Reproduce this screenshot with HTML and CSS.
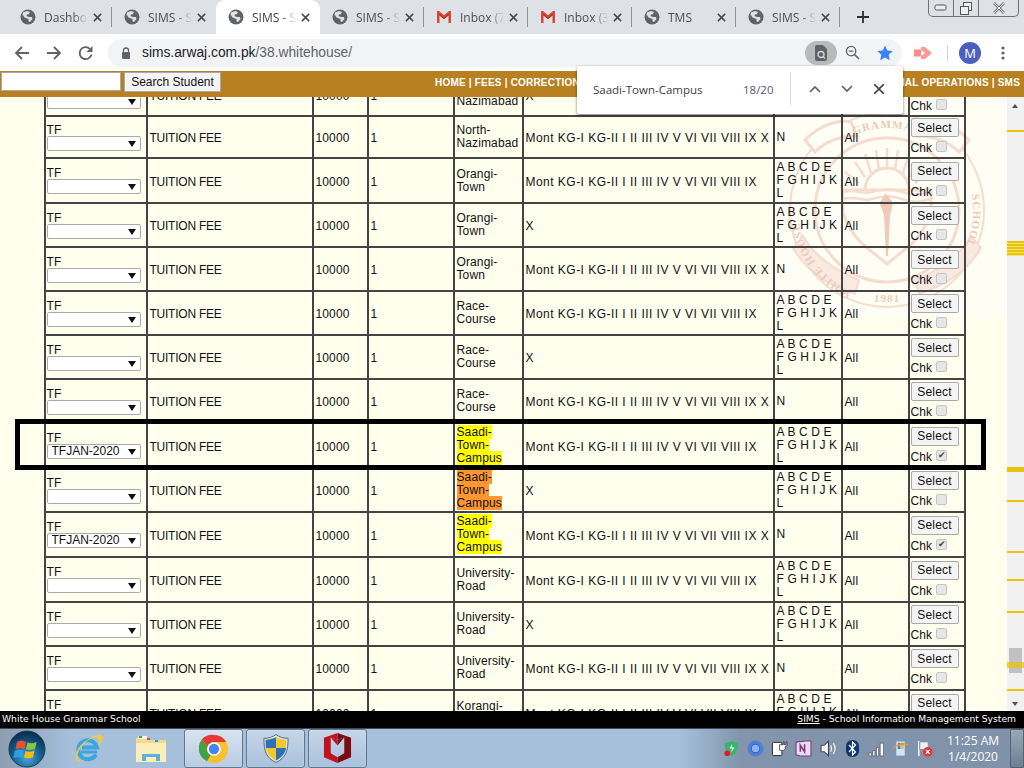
FILE: index.html
```html
<!DOCTYPE html>
<html lang="en">
<head>
<meta charset="utf-8">
<title>SIMS</title>
<link rel="stylesheet" href="styles.css">
</head>
<body>
<svg class="defs" width="0" height="0" aria-hidden="true">
  <symbol id="globe" viewBox="0 0 16 16">
    <circle cx="8" cy="8" r="7.5" fill="#5f6368"/>
    <path d="M3 3.5l4-1.5 3 1-1 2-2 .5-.5 1.5 2.5 1 3 0 .5 2-2.500 3-1.500-.5 0-2.500-3-1-1-.5-2-3z" fill="#dee1e6"/>
  </symbol>
  <symbol id="gmail" viewBox="0 0 16 16">
    <path d="M1 2h2l5 4.200L13 2h2v12h-2.500V6.500L8 10 3.500 6.500V14H1z" fill="#d44638"/>
    <path d="M3.500 6.500L8 10l4.500-3.500V5L8 8.500 3.500 5z" fill="#b23121"/>
  </symbol>
  <symbol id="x" viewBox="0 0 10 10">
    <path d="M1 1l8 8M9 1l-8 8" fill="none" stroke="#45484c" stroke-width="1.700"/>
  </symbol>
</svg>

<div class="app">
  <header class="tabstrip">
    <div class="tab sep"><svg class="fav"><use href="#globe"/></svg><span class="tlabel">Dashboard</span><svg class="tx"><use href="#x"/></svg></div>
    <div class="tab"><svg class="fav"><use href="#globe"/></svg><span class="tlabel">SIMS - School</span><svg class="tx"><use href="#x"/></svg></div>
    <div class="tab active"><svg class="fav"><use href="#globe"/></svg><span class="tlabel">SIMS - School</span><svg class="tx"><use href="#x"/></svg></div>
    <div class="tab sep"><svg class="fav"><use href="#globe"/></svg><span class="tlabel">SIMS - School</span><svg class="tx"><use href="#x"/></svg></div>
    <div class="tab sep"><svg class="fav"><use href="#gmail"/></svg><span class="tlabel">Inbox (7)</span><svg class="tx"><use href="#x"/></svg></div>
    <div class="tab sep"><svg class="fav"><use href="#gmail"/></svg><span class="tlabel">Inbox (3)</span><svg class="tx"><use href="#x"/></svg></div>
    <div class="tab sep"><svg class="fav"><use href="#globe"/></svg><span class="tlabel">TMS</span><svg class="tx"><use href="#x"/></svg></div>
    <div class="tab sep"><svg class="fav"><use href="#globe"/></svg><span class="tlabel">SIMS - School</span><svg class="tx"><use href="#x"/></svg></div>
    <svg class="plus" viewBox="0 0 12 12"><path d="M6 0v12M0 6h12" stroke="#2c2e31" stroke-width="1.800" fill="none"/></svg>
    <div class="winctl">
      <span class="wbtn wmin"><svg viewBox="0 0 14 8" width="14" height="8"><rect x="1" y="1" width="11" height="5" rx="1.500" fill="#eee" stroke="#555"/></svg></span>
      <span class="wbtn wmid"><svg viewBox="0 0 14 13" width="14" height="13"><rect x="4.500" y=".5" width="8" height="8" fill="#eee" stroke="#555"/><rect x="1.500" y="4.500" width="8" height="8" fill="#eee" stroke="#555"/></svg></span>
      <span class="wbtn wcls"><svg viewBox="0 0 14 12" width="14" height="12"><path d="M2 1l10 10M12 1L2 11" stroke="#777" stroke-width="2.500" fill="none"/><path d="M2 1l10 10M12 1L2 11" stroke="#eee" stroke-width="1" fill="none"/></svg></span>
    </div>
  </header>

  <nav class="toolbar">
    <svg class="tbi" viewBox="0 0 16 16"><path d="M15 8H2M8 2L2 8l6 6" fill="none" stroke="#5f6368" stroke-width="1.800"/></svg>
    <svg class="tbi" viewBox="0 0 16 16"><path d="M1 8h13M8 2l6 6-6 6" fill="none" stroke="#5f6368" stroke-width="1.800"/></svg>
    <svg class="tbi" viewBox="0 0 16 16"><path d="M13.500 9.500A6 6 0 1 1 12 4" fill="none" stroke="#5f6368" stroke-width="1.800"/><path d="M14.500 1v6h-6z" fill="#5f6368"/></svg>
    <div class="omnibox">
      <svg class="lock" viewBox="0 0 10 12"><path d="M2.500 5V3.500a2.500 2.500 0 0 1 5 0V5" fill="none" stroke="#5f6368" stroke-width="1.300"/><rect x="1" y="5" width="8" height="7" rx="1" fill="#5f6368"/></svg>
      <span class="url"><span class="host">sims.arwaj.com.pk</span>/38.whitehouse/</span>
      <span class="omni-right">
        <span class="lens"><svg viewBox="0 0 14 16" width="14" height="16"><path d="M1 2a2 2 0 0 1 2-2h6l4 4v10a2 2 0 0 1-2 2H3a2 2 0 0 1-2-2z" fill="#5f6368"/><circle cx="7" cy="9.500" r="3" fill="none" stroke="#d6d6d6" stroke-width="1.300"/><path d="M9 11.500l2 2" stroke="#d6d6d6" stroke-width="1.300"/></svg></span>
        <svg class="zoomi" viewBox="0 0 16 16"><circle cx="6.500" cy="6.500" r="5" fill="none" stroke="#5f6368" stroke-width="1.400"/><path d="M10 10l5 5" stroke="#5f6368" stroke-width="1.600"/><path d="M4 6.500h5" stroke="#5f6368" stroke-width="1.300"/></svg>
        <svg class="star" viewBox="0 0 16 16"><path d="M8 .5l2.300 5 5.400.6-4 3.700 1.100 5.400L8 12.500l-4.800 2.700 1.100-5.400-4-3.700 5.400-.6z" fill="#3b82f6"/></svg>
      </span>
    </div>
    <svg class="ext" viewBox="0 0 18 14"><path d="M0 4h6V5H0z" fill="#fb8a8a"/><rect x="0" y="3.500" width="7" height="7" fill="#fb8a8a"/><path d="M7 1h4l7 6-7 6H7v-3l4-3-4-3z" fill="#fb9a9a"/></svg>
    <span class="tbsep"></span>
    <span class="avatar">M</span>
    <svg class="dots" viewBox="0 0 4 14"><circle cx="2" cy="2" r="1.600" fill="#5f6368"/><circle cx="2" cy="7" r="1.600" fill="#5f6368"/><circle cx="2" cy="12" r="1.600" fill="#5f6368"/></svg>
  </nav>

  <div class="topbar">
    <input class="sinput" type="text" aria-label="Search">
    <button class="sbtn" type="button">Search Student</button>
    <div class="menu"><span>HOME | FEES | CORRECTIONS</span><span>SPECIAL OPERATIONS | SMS</span></div>
  </div>

  <main class="content">
    <svg class="seal" viewBox="0 0 237 220" aria-hidden="true">
      <rect width="237" height="220" fill="#fffef5"/>
      <g transform="translate(117 113)" fill="none" stroke="#f4dcd0">
        <circle r="97" stroke-width="2"/>
        <circle r="72" stroke-width="3"/>
        <path id="arcT" d="M-82 0A82 82 0 0 1 82 0" stroke="none"/>
        <path id="arcL" d="M-14 88A89 89 0 0 1-88 -10" stroke="none"/>
        <path id="arcR" d="M76 -40A86 86 0 0 1 64 58" stroke="none"/>
        <path d="M-82 -70c18-18 36-20 46-18l6 14c-16 0-30 4-42 16z" fill="#fffef5" stroke-width="3"/>
        <path d="M82 -70c-18-18-36-20-46-18l-6 14c16 0 30 4 42 16z" fill="#fffef5" stroke-width="3"/>
        <path d="M-44 -20L44 -20 44 2 C36 30 16 40 0 54 C-16 40 -36 30 -44 2z" stroke-width="3"/>
        <g stroke-width="2.500">
          <path d="M0 -62V-40M-11 -60l3 20M11 -60l-3 20M-22 -56l6 19M22 -56l-6 19M-32 -48l10 15M32 -48l-10 15M-42 -38l14 11M42 -38l-14 11"/>
          <path d="M-22 -20a22 22 0 0 1 44 0" stroke-width="3"/>
          <path d="M-44 -18c12-4 18 3 29 0s18-4 30 0 18 3 29 0M-44 -11c12-4 18 3 29 0s18-4 30 0 18 3 29 0"/>
        </g>
        <path d="M-6 -3c-3-6 3-9 4-14 3 4 9 7 7 14l-2 8H-3zM-3 5H3L1 46H-1z" fill="#f1c9b7" stroke="none"/>
        <path d="M-84 26c14 24 36 36 56 44l-4 14c-24-8-48-22-62-46zM84 26c-14 24-36 36-56 44l4 14c24-8 48-22 62-46z" fill="#f9e9e0" stroke-width="2"/>
        <g class="sealtext" stroke="none">
          <text><textPath href="#arcT" startOffset="50%" text-anchor="middle">GRAMMAR</textPath></text>
          <text><textPath href="#arcL" startOffset="50%" text-anchor="middle">WHITE HOUSE</textPath></text>
          <text><textPath href="#arcR" startOffset="50%" text-anchor="middle">SCHOOL</textPath></text>
          <text x="0" y="92" text-anchor="middle">1981</text>
        </g>
      </g>
    </svg>

    <table class="grid">
      <colgroup><col class="c1"><col class="c2"><col class="c3"><col class="c4"><col class="c5"><col class="c6"><col class="c7"><col class="c8"><col class="c9"></colgroup>
      <tbody>
        <tr class="r42"><td><span class="tf">TF</span><span class="sel"><select aria-label="TF"><option></option></select></span></td><td>TUITION FEE</td><td>10000</td><td>1</td><td>North-<br>Nazimabad</td><td>X</td><td>A B C D E F G H I J K L</td><td>All</td><td><button class="pick" type="button">Select</button><label class="chk">Chk <input type="checkbox"></label></td></tr>
        <tr class="r42"><td><span class="tf">TF</span><span class="sel"><select aria-label="TF"><option></option></select></span></td><td>TUITION FEE</td><td>10000</td><td>1</td><td>North-<br>Nazimabad</td><td>Mont KG-I KG-II I II III IV V VI VII VIII IX X</td><td>N</td><td>All</td><td><button class="pick" type="button">Select</button><label class="chk">Chk <input type="checkbox"></label></td></tr>
        <tr class="r45"><td><span class="tf">TF</span><span class="sel"><select aria-label="TF"><option></option></select></span></td><td>TUITION FEE</td><td>10000</td><td>1</td><td>Orangi-<br>Town</td><td>Mont KG-I KG-II I II III IV V VI VII VIII IX</td><td>A B C D E F G H I J K L</td><td>All</td><td><button class="pick" type="button">Select</button><label class="chk">Chk <input type="checkbox"></label></td></tr>
        <tr class="r44"><td><span class="tf">TF</span><span class="sel"><select aria-label="TF"><option></option></select></span></td><td>TUITION FEE</td><td>10000</td><td>1</td><td>Orangi-<br>Town</td><td>X</td><td>A B C D E F G H I J K L</td><td>All</td><td><button class="pick" type="button">Select</button><label class="chk">Chk <input type="checkbox"></label></td></tr>
        <tr class="r44"><td><span class="tf">TF</span><span class="sel"><select aria-label="TF"><option></option></select></span></td><td>TUITION FEE</td><td>10000</td><td>1</td><td>Orangi-<br>Town</td><td>Mont KG-I KG-II I II III IV V VI VII VIII IX X</td><td>N</td><td>All</td><td><button class="pick" type="button">Select</button><label class="chk">Chk <input type="checkbox"></label></td></tr>
        <tr class="r44"><td><span class="tf">TF</span><span class="sel"><select aria-label="TF"><option></option></select></span></td><td>TUITION FEE</td><td>10000</td><td>1</td><td>Race-<br>Course</td><td>Mont KG-I KG-II I II III IV V VI VII VIII IX</td><td>A B C D E F G H I J K L</td><td>All</td><td><button class="pick" type="button">Select</button><label class="chk">Chk <input type="checkbox"></label></td></tr>
        <tr class="r44"><td><span class="tf">TF</span><span class="sel"><select aria-label="TF"><option></option></select></span></td><td>TUITION FEE</td><td>10000</td><td>1</td><td>Race-<br>Course</td><td>X</td><td>A B C D E F G H I J K L</td><td>All</td><td><button class="pick" type="button">Select</button><label class="chk">Chk <input type="checkbox"></label></td></tr>
        <tr class="r44"><td><span class="tf">TF</span><span class="sel"><select aria-label="TF"><option></option></select></span></td><td>TUITION FEE</td><td>10000</td><td>1</td><td>Race-<br>Course</td><td>Mont KG-I KG-II I II III IV V VI VII VIII IX X</td><td>N</td><td>All</td><td><button class="pick" type="button">Select</button><label class="chk">Chk <input type="checkbox"></label></td></tr>
        <tr class="r45"><td><span class="tf">TF</span><span class="sel"><select aria-label="TF"><option>TFJAN-2020</option></select></span></td><td>TUITION FEE</td><td>10000</td><td>1</td><td><mark class="hit">Saadi-<br>Town-<br>Campus</mark></td><td>Mont KG-I KG-II I II III IV V VI VII VIII IX</td><td>A B C D E F G H I J K L</td><td>All</td><td><button class="pick" type="button">Select</button><label class="chk">Chk <input type="checkbox" checked></label></td></tr>
        <tr class="r44"><td><span class="tf">TF</span><span class="sel"><select aria-label="TF"><option></option></select></span></td><td>TUITION FEE</td><td>10000</td><td>1</td><td><mark class="hit now">Saadi-<br>Town-<br>Campus</mark></td><td>X</td><td>A B C D E F G H I J K L</td><td>All</td><td><button class="pick" type="button">Select</button><label class="chk">Chk <input type="checkbox"></label></td></tr>
        <tr class="r45"><td><span class="tf">TF</span><span class="sel"><select aria-label="TF"><option>TFJAN-2020</option></select></span></td><td>TUITION FEE</td><td>10000</td><td>1</td><td><mark class="hit">Saadi-<br>Town-<br>Campus</mark></td><td>Mont KG-I KG-II I II III IV V VI VII VIII IX X</td><td>N</td><td>All</td><td><button class="pick" type="button">Select</button><label class="chk">Chk <input type="checkbox" checked></label></td></tr>
        <tr class="r45"><td><span class="tf">TF</span><span class="sel"><select aria-label="TF"><option></option></select></span></td><td>TUITION FEE</td><td>10000</td><td>1</td><td>University-<br>Road</td><td>Mont KG-I KG-II I II III IV V VI VII VIII IX</td><td>A B C D E F G H I J K L</td><td>All</td><td><button class="pick" type="button">Select</button><label class="chk">Chk <input type="checkbox"></label></td></tr>
        <tr class="r44"><td><span class="tf">TF</span><span class="sel"><select aria-label="TF"><option></option></select></span></td><td>TUITION FEE</td><td>10000</td><td>1</td><td>University-<br>Road</td><td>X</td><td>A B C D E F G H I J K L</td><td>All</td><td><button class="pick" type="button">Select</button><label class="chk">Chk <input type="checkbox"></label></td></tr>
        <tr class="r44"><td><span class="tf">TF</span><span class="sel"><select aria-label="TF"><option></option></select></span></td><td>TUITION FEE</td><td>10000</td><td>1</td><td>University-<br>Road</td><td>Mont KG-I KG-II I II III IV V VI VII VIII IX X</td><td>N</td><td>All</td><td><button class="pick" type="button">Select</button><label class="chk">Chk <input type="checkbox"></label></td></tr>
        <tr class="r45"><td><span class="tf">TF</span><span class="sel"><select aria-label="TF"><option></option></select></span></td><td>TUITION FEE</td><td>10000</td><td>1</td><td>Korangi-<br>Road</td><td>Mont KG-I KG-II I II III IV V VI VII VIII IX</td><td>A B C D E F G H I J K L</td><td>All</td><td><button class="pick" type="button">Select</button><label class="chk">Chk <input type="checkbox"></label></td></tr>
      </tbody>
    </table>

    <div class="scrollbar">
      <span class="sb-up"></span>
      <span class="sb-thumb"></span>
      <span class="sb-down"></span>
      <i class="tick t1"></i><i class="tick t2"></i><i class="tick t3"></i><i class="tick t4"></i><i class="tick t5"></i><i class="tick t6"></i><i class="tick t7"></i><i class="tick t8"></i><i class="tick t9"></i>
    </div>
    <div class="callout"></div>
  </main>

  <footer class="statusbar">
    <span>White House Grammar School</span>
    <span><u>SIMS</u> - School Information Management System</span>
  </footer>

  <div class="taskbar">
    <svg class="orb" viewBox="0 0 38 38">
      <defs><radialGradient id="orbg" cx="50%" cy="75%" r="70%"><stop offset="0" stop-color="#4aa8d8"/><stop offset=".6" stop-color="#125a8a"/><stop offset="1" stop-color="#0b2f50"/></radialGradient></defs>
      <circle cx="19" cy="19" r="18" fill="url(#orbg)" stroke="#1d3c58"/>
      <path d="M9 12c4-2 6-1 9 0l-1.500 7c-3-1-5-1-9 0z" fill="#e8502f"/>
      <path d="M19.500 12.500c3 1 6 1 9-.5l-1.500 7c-3 1-6 1-9 .5z" fill="#8cc63f"/>
      <path d="M7 20.500c4-1 6-1 9 0L14.500 28c-3-1-5-1-9 0z" fill="#2f9fe0"/>
      <path d="M17.500 21c3 1 6 1 9-.5l-1.500 7c-3 1-6 1-9 0z" fill="#f8b91c"/>
    </svg>
    <svg class="ie" viewBox="0 0 32 32">
      <path d="M24 21.500a9.500 9.500 0 1 1 1-7H10" fill="none" stroke="#3aa6e0" stroke-width="4"/>
      <path d="M9 19h16" stroke="#3aa6e0" stroke-width="3"/>
      <path d="M5 28C1 25 5 13 15 7S31 0 31 5c0 3-3 6-5 8 1-3 2-6 0-8-3-2-10 1-15 7S3 25 7 27c2 1 5 0 7-1-3 2-7 3-9 2z" fill="#f5c842"/>
    </svg>
    <svg class="folder" viewBox="0 0 32 32">
      <path d="M1 5h12l2 2h16v21H1z" fill="#f3d98d"/>
      <path d="M3 3h9v3H3z" fill="#fff8dc"/><rect x="4" y="3" width="3" height="2" fill="#3aa655"/><rect x="12" y="5" width="3" height="2" fill="#d44"/><rect x="20" y="7" width="3" height="2" fill="#3a8fe0"/>
      <path d="M1 10h30v19H1z" fill="#fbeeb8"/>
      <path d="M7 28v-7h18v7h-4v-4H11v4z" fill="#5fb0df"/>
    </svg>
    <span class="tile first">
      <svg viewBox="0 0 32 32" width="30" height="30"><circle cx="16" cy="16" r="15" fill="#fbc02d"/><path d="M16 1a15 15 0 0 1 13 7.500H16a7.500 7.500 0 0 0-7 4.800L3 5.800A15 15 0 0 1 16 1z" fill="#e53935"/><path d="M3 5.800l6 7.500a7.500 7.500 0 0 0 3.500 9.300L8.500 29A15 15 0 0 1 3 5.800z" fill="#43a047"/><circle cx="16" cy="16" r="7.200" fill="#fff"/><circle cx="16" cy="16" r="5.500" fill="#4285f4"/></svg>
    </span>
    <span class="tile">
      <svg viewBox="0 0 28 32" width="26" height="31"><path d="M14 1c4 3 8 4 13 4 0 13-2 21-13 26C3 26 1 18 1 5c5 0 9-1 13-4z" fill="#dfe6ee" stroke="#566"/><path d="M14 3.500v12H3c0-3-.2-6-.2-9 4 0 8-1 11.200-3z" fill="#2f6fb8"/><path d="M14 3.500c3 2 7 3 11 3 0 3 0 6-.3 9H14z" fill="#f4c72e"/><path d="M3.200 15.500H14V29C7 25 4 21 3.200 15.500z" fill="#f4c72e"/><path d="M14 15.500h10.800C24 21 21 25 14 29z" fill="#2f6fb8"/></svg>
    </span>
    <span class="tile">
      <svg viewBox="0 0 30 32" width="29" height="31"><path d="M1 5L15 0V7L8 4.500V21l7 4v6L1 25z" fill="#c1121f"/><path d="M8 4.500L15 11v14l-7-4z" fill="none"/><path d="M15 0l14 5v20l-14 6v-6l7-4V4.500L15 7z" fill="#7b0c12"/><path d="M8 4.500l7 2.500v6z" fill="#c1121f"/><path d="M22 4.500L15 7v6z" fill="#7b0c12"/></svg>
    </span>
    <div class="tray">
      <svg class="ti" viewBox="0 0 16 18"><path d="M8 1c2 1 4 2 7 2 0 7-1 11-7 14C2 14 1 10 1 3c3 0 5-1 7-2z" fill="#3ab36e"/><path d="M9 4L6 9h3l-2 5 4-6H8z" fill="#fff"/><circle cx="3.500" cy="14" r="3" fill="#e21c21"/></svg>
      <svg class="ti" viewBox="0 0 16 16"><circle cx="8" cy="8" r="7.500" fill="#4f7fd6"/><circle cx="8" cy="8" r="4" fill="#8fb2ee" stroke="#3465c4"/></svg>
      <svg class="ti" viewBox="0 0 18 18"><rect x="1.500" y="2.500" width="10" height="14" rx="1" fill="#fff" stroke="#222"/><path d="M9 5h4V2h1v3h2V2h1v4l-2 1v2a2 2 0 0 1-2 2H9z" fill="#fff" stroke="#222" stroke-width=".7"/></svg>
      <svg class="ti" viewBox="0 0 16 16"><path d="M1 2l9-1h5v14H5l-4-1z" fill="#e8dcef" stroke="#80397b"/><path d="M5 11V5l4 6V4" fill="none" stroke="#80397b" stroke-width="1.500"/></svg>
      <svg class="ti" viewBox="0 0 16 16"><path d="M1 5h3l4-4v14l-4-4H1z" fill="#f3f5f8" stroke="#445"/><path d="M10 5c1 2 1 4 0 6M12.500 3c2 3 2 7 0 10" fill="none" stroke="#e6eaf0" stroke-width="1.300"/></svg>
      <svg class="ti" viewBox="0 0 13 17"><rect width="13" height="17" rx="6" fill="#0b3772"/><path d="M3 5l6.500 7-3 3V2l3 3L3 12" fill="none" stroke="#fff" stroke-width="1.200"/></svg>
      <svg class="ti" viewBox="0 0 16 14"><path d="M1 11h2v3H1zM4.500 9h2v5h-2zM8 6h2v8H8zM11.500 2h3v12h-3z" fill="#fff" stroke="#334" stroke-width=".5"/></svg>
      <svg class="ti" viewBox="0 0 18 18"><rect x="4" y="1" width="10" height="16" fill="#cfe4f6" stroke="#6e93b8"/><path d="M6 3h3v3H6z" fill="#e2582a"/><path d="M9.500 3h3v3h-3z" fill="#6db33f"/><path d="M6 6.500h3v3H6z" fill="#2f86d8"/><path d="M9.500 6.500h3v3h-3z" fill="#f4c02c"/><path d="M1 9c3-4 12-6 16-4" fill="none" stroke="#f09a2c" stroke-width="1.300"/></svg>
      <svg class="ti" viewBox="0 0 18 18"><path d="M3 1v16" stroke="#fff" stroke-width="1.500"/><path d="M4 2h9v8H4z" fill="#eef1f5" stroke="#889"/><circle cx="12.500" cy="12.500" r="5" fill="#e33"/><path d="M10.500 10.500l4 4M14.500 10.500l-4 4" stroke="#fff" stroke-width="1.300"/></svg>
    </div>
    <div class="clock"><span>11:25 AM</span><span>1/4/2020</span></div>
    <span class="showdesk"></span>
  </div>

  <div class="findbar">
    <span class="fterm">Saadi-Town-Campus</span>
    <span class="fcount">18/20</span>
    <span class="fsep"></span>
    <svg class="fi" viewBox="0 0 12 8"><path d="M1 7l5-5 5 5" fill="none" stroke="#5f6368" stroke-width="1.700"/></svg>
    <svg class="fi" viewBox="0 0 12 8"><path d="M1 1l5 5 5-5" fill="none" stroke="#5f6368" stroke-width="1.700"/></svg>
    <svg class="fi fx" viewBox="0 0 10 10"><path d="M0 0l10 10M10 0L0 10" fill="none" stroke="#45484c" stroke-width="1.700"/></svg>
  </div>
</div>
</body>
</html>
```
FILE: styles.css
```css
* { box-sizing: border-box; }
html, body { margin: 0; height: 100%; overflow: hidden; }
body { font-family: "Liberation Sans", Arial, sans-serif; font-size: 12px; color: #111; }
.defs { position: absolute; }
.app { position: relative; width: 1024px; height: 768px; display: flex; flex-direction: column; overflow: hidden; background: #fff; }

/* browser tabs */
.tabstrip { position: relative; flex: 0 0 34px; display: flex; padding-left: 8px; background: #dee1e6; }
.tab { position: relative; flex: 0 0 104px; min-width: 0; display: flex; align-items: center; padding: 0 10px 0 12px; color: #4b4e52; font: 12px "Open Sans", sans-serif; }
.tab.sep::after { content: ""; position: absolute; right: 0; top: 7px; height: 20px; width: 1px; background: #8f9296; }
.tab.active { background: #fff; border-radius: 9px 9px 0 0; color: #3c4043; }
.fav { flex: 0 0 16px; width: 16px; height: 16px; margin-right: 8px; }
.tlabel { flex: 1; min-width: 0; white-space: nowrap; overflow: hidden; -webkit-mask-image: linear-gradient(90deg, #000 60%, transparent 92%); mask-image: linear-gradient(90deg, #000 60%, transparent 92%); }
.tx { flex: 0 0 9px; width: 9px; height: 9px; margin-left: 1px; }
.plus { width: 12px; height: 12px; margin: 11px 0 0 17px; }
.winctl { position: absolute; right: 5px; top: 0; width: 91px; height: 17px; display: flex; border: 1px solid #6d7278; border-top: 0; border-radius: 0 0 5px 5px; }
.wbtn { display: flex; align-items: center; justify-content: center; height: 16px; border-right: 1px solid #6d7278; }
.wmin, .wmid { flex: 0 0 25px; }
.wcls { flex: 1; border-right: 0; }

/* toolbar */
.toolbar { flex: 0 0 37px; display: flex; align-items: center; padding: 0 0 0 14px; background: #fff; }
.tbi { width: 16px; height: 16px; margin-right: 16px; }
.omnibox { width: 794px; height: 28px; margin: 0 0 0 -2px; display: flex; align-items: center; padding-left: 13px; background: #f1f3f4; border-radius: 14px; }
.lock { width: 10px; height: 12px; margin-right: 11px; }
.url { font: 13.800px "Liberation Sans", sans-serif; color: #5f6368; }
.host { color: #202124; }
.omni-right { margin-left: auto; display: flex; align-items: center; }
.lens { width: 32px; height: 24px; display: flex; align-items: center; justify-content: center; border-radius: 12px; background: #b9b9b9; margin-right: 8px; }
.zoomi { width: 15px; height: 15px; margin-right: 17px; }
.star { width: 16px; height: 16px; margin-right: 9px; }
.ext { width: 18px; height: 14px; margin-left: 12px; }
.tbsep { width: 1px; height: 16px; margin-left: 15px; background: #d2d4d7; }
.avatar { width: 22px; height: 22px; margin-left: 11px; display: flex; align-items: center; justify-content: center; border-radius: 50%; background: #4c5fc0; color: #fff; font: 13px "Open Sans", sans-serif; }
.dots { width: 4px; height: 14px; margin-left: 20px; }

/* site header */
.topbar { flex: 0 0 26px; display: flex; align-items: flex-start; padding: 1px 4px 0 1px; background: #b88021; }
.sinput { width: 120px; height: 19px; border: 1px solid #aaa; background: #fff; padding: 0; }
.sbtn { width: 97px; height: 20px; margin-left: 3px; padding: 0; border: 1px solid #aaa; border-radius: 1px; background: #f4f4f4; font: 12px "Liberation Sans", sans-serif; color: #111; }
.menu { margin-left: auto; width: 585px; margin-top: 5px; display: flex; justify-content: space-between; color: #fff; font: bold 10px "Liberation Sans", sans-serif; letter-spacing: .2px; white-space: nowrap; }

/* page */
.content { position: relative; flex: 1; min-height: 0; overflow: hidden; padding-left: 44px; background: #ffffee; }
.seal { position: absolute; left: 770px; top: 0; width: 237px; height: 220px; }
.grid { position: relative; margin-top: -24px; width: 920px; table-layout: fixed; border-collapse: collapse; }
.c1 { width: 102px; } .c2 { width: 166px; } .c3 { width: 55px; } .c4 { width: 86px; } .c5 { width: 69px; }
.c6 { width: 251px; } .c7 { width: 68px; } .c8 { width: 67px; } .c9 { width: 56px; }
.grid td { border: 2px solid #444; padding: 0 2px 0 1.500px; vertical-align: middle; line-height: 13px; letter-spacing: .12px; }
.grid td:nth-child(1) { padding-left: .5px; }
.grid td:nth-child(2) { padding-top: 3px; letter-spacing: -.24px; }
.grid td:nth-child(3), .grid td:nth-child(4), .grid td:nth-child(8) { padding-top: 3px; }
.grid td:nth-child(6) { padding-top: 3px; letter-spacing: .47px; }
.grid td:nth-child(9) { padding-left: .5px; }
.r42 { height: 42px; } .r44 { height: 44px; } .r45 { height: 45px; }
.tf { display: block; height: 12px; }
.sel { position: relative; display: block; width: 94px; height: 15px; }
.sel select { appearance: none; -webkit-appearance: none; display: block; width: 100%; height: 15px; padding: 0 0 0 4px; border: 1px solid #aaa; border-radius: 2px; background: #fff; font: 12px "Liberation Sans", sans-serif; line-height: 13px; color: #111; }
.sel::after { content: ""; position: absolute; right: 5px; top: 5px; border: 4px solid transparent; border-top: 6px solid #111; border-bottom: 0; }
.hit { background: #ffff00; color: #111; }
.hit.now { background: #ff9632; }
.pick { display: block; width: 48px; height: 19px; padding: 0; margin: 0 0 5px; border: 1px solid #aaa; border-radius: 2px; background: #f4f4f4; font: 12px "Liberation Sans", sans-serif; color: #111; letter-spacing: .2px; }
.chk { display: flex; align-items: flex-start; gap: 4px; height: 14px; }
.chk input { appearance: none; -webkit-appearance: none; position: relative; width: 11px; height: 11px; margin: -1px 0 0 0; border: 1px solid #c4c4c4; border-radius: 2px; background: #e6e6e6; }
.chk input:checked::before { content: "\2714"; position: absolute; left: 1px; top: -1px; font-size: 9px; line-height: 11px; color: #444; }

/* page scrollbar */
.scrollbar { position: absolute; top: 0; right: 0; width: 17px; height: 100%; background: #f1f1f1; }
.sb-up, .sb-down { position: absolute; left: 5px; border: 4px solid transparent; border-left-width: 3.500px; border-right-width: 3.500px; }
.sb-up { top: 7px; border-top: 0; border-bottom: 4px solid #505050; }
.sb-down { bottom: 5px; border-bottom: 0; border-top: 4px solid #505050; }
.sb-thumb { position: absolute; left: 2px; top: 551px; width: 13px; height: 25px; background: #c1c1c1; }
.tick { position: absolute; left: 0; right: 0; height: 2px; background: #e8c000; opacity: .95; }
.t1 { top: 33px; }
.t2 { top: 144px; height: 15px; background: repeating-linear-gradient(#e8c000 0 2px, #f3e36b 2px 3px); }
.t3 { top: 370px; height: 5px; } .t4 { top: 403px; } .t5 { top: 454px; } .t6 { top: 482px; } .t7 { top: 514px; }
.t8 { top: 565px; height: 6px; opacity: .7; } .t9 { top: 592px; }
.callout { position: absolute; left: 15px; top: 322px; width: 971px; height: 51px; border: 5px solid #000; }

.sealtext { fill: #ecc9b9; font: bold 11px "Liberation Serif", serif; letter-spacing: 1px; }

/* site footer */
.statusbar { flex: 0 0 17px; display: flex; justify-content: space-between; align-items: center; padding: 0 8px 2px 2px; background: #000; color: #fff; font: 9.200px "DejaVu Sans", sans-serif; }

/* windows taskbar */
.taskbar { flex: 0 0 40px; display: flex; align-items: center; background: linear-gradient(90deg, #8c9db1 0, #a6bfdb 70px, #a6bfdb 680px, #8295ac 740px, #7f92a9 100%); border-top: 1px solid #3e4a57; }
.orb { width: 38px; height: 38px; margin-left: 8px; }
.ie { width: 32px; height: 32px; margin-left: 26px; }
.folder { width: 32px; height: 32px; margin-left: 31px; }
.tile { width: 59px; height: 39px; margin-left: 3px; display: flex; align-items: center; justify-content: center; border: 1px solid #5f7690; border-radius: 3px; background: linear-gradient(#c7d6e8, #a9c1dc); box-shadow: inset 0 0 1px #fff; }
.tile.first { margin-left: 17px; background: linear-gradient(#d8e3ef, #b8cce2); }
.tray { width: 210px; margin-left: auto; display: flex; align-items: center; justify-content: space-between; }
.ti { width: 17px; height: 17px; }
.clock { width: 62px; margin: 0 6px 0 9px; display: flex; flex-direction: column; align-items: center; color: #fff; font: 12px/16px "Open Sans", sans-serif; }
.showdesk { flex: 0 0 14px; height: 39px; background: linear-gradient(#99a8b8, #6d7f93); border: 1px solid #56626f; border-radius: 1px; }

/* find in page */
.findbar { position: absolute; left: 577px; top: 66px; width: 326px; height: 48px; display: flex; align-items: center; padding: 0 0 2px 16px; background: #fff; border-radius: 2px; box-shadow: 0 1px 3px rgba(0,0,0,.55); font: 11.500px "Open Sans", sans-serif; color: #3c4043; }
.fterm { width: 150px; }
.fcount { width: 47px; color: #5a5570; }
.fsep { width: 1px; height: 32px; background: #dadce0; margin-right: 18px; }
.fi { width: 12px; height: 8px; margin-right: 20px; }
.fx { width: 10px; height: 10px; margin: 0 0 0 1px; }
```
